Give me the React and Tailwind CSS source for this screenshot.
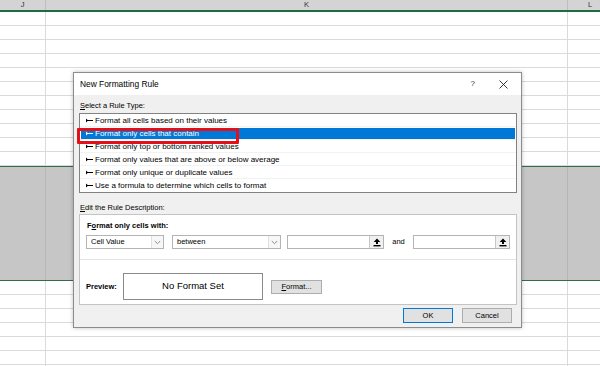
import React from "react";

const font = { fontFamily: '"Liberation Sans", Arial, sans-serif' };

function Row() {
  return (
    <div className="flex h-[14px] border-b border-[#dadada]">
      <div className="w-[46px] border-r border-[#dadada]" />
      <div className="flex-1 border-r border-[#dadada]" />
      <div className="w-[32px]" />
    </div>
  );
}

function Marker({ color }) {
  return (
    <svg width="7" height="5" viewBox="0 0 7 5" className="shrink-0">
      <path d="M0 0.5 L2.2 2.5 L0 4.5 Z" fill={color} />
      <rect x="0" y="2" width="7" height="1" fill={color} />
    </svg>
  );
}

function Chevron() {
  return (
    <svg width="7" height="5" viewBox="0 0 7 5">
      <path d="M0.8 1 L3.5 3.7 L6.2 1" fill="none" stroke="#8a8a8a" strokeWidth="1" />
    </svg>
  );
}

function Collapse() {
  return (
    <svg width="8" height="9" viewBox="0 0 8 9">
      <path d="M4 0.5 L7.3 4 L5 4 L5 6 L3 6 L3 4 L0.7 4 Z" fill="#000" />
      <rect x="0.5" y="7" width="7" height="1.4" fill="#000" />
    </svg>
  );
}

function Dropdown({ label, w }) {
  return (
    <div className={`flex h-[14px] ${w} border border-[#b4b4b4] bg-white`}>
      <div className="flex-1 pl-[4px] text-[7.5px] leading-[12px]">{label}</div>
      <div className="w-[12px] flex items-center justify-center border-l border-[#e0e0e0] bg-[#f7f7f7]">
        <Chevron />
      </div>
    </div>
  );
}

function RefInput() {
  return (
    <div className="flex h-[14px] w-[97px] border border-[#b4b4b4] bg-white">
      <div className="flex-1" />
      <div className="w-[14px] flex items-center justify-center border-l border-[#c8c8c8] bg-[#f0f0f0]">
        <Collapse />
      </div>
    </div>
  );
}

const rules = [
  "Format all cells based on their values",
  "Format only cells that contain",
  "Format only top or bottom ranked values",
  "Format only values that are above or below average",
  "Format only unique or duplicate values",
  "Use a formula to determine which cells to format",
];

export default function App() {
  return (
    <div className="relative w-[600px] h-[366px] overflow-hidden bg-white" style={font}>
      {/* column headers */}
      <div className="flex h-[12px] bg-[#d4d4d4] border-b-2 border-[#1f6b43] text-[7.5px] text-[#333] leading-[10px]">
        <div className="w-[46px] border-r border-[#bdbdbd] text-center">J</div>
        <div className="flex-1 border-r border-[#bdbdbd] text-center">K</div>
        <div className="w-[32px] text-center pl-[12px]">L</div>
      </div>

      {Array.from({ length: 11 }).map((_, i) => (
        <Row key={"a" + i} />
      ))}

      {/* selected rows */}
      <div className="flex h-[115px] bg-[#c6c6c6] border-y border-[#2f6e4a]">
        <div className="w-[46px] border-r border-[#b6b6b6]" />
        <div className="flex-1 border-r border-[#b6b6b6]" />
        <div className="w-[32px]" />
      </div>

      {Array.from({ length: 7 }).map((_, i) => (
        <Row key={"b" + i} />
      ))}

      {/* dialog */}
      <div className="absolute left-[73px] top-[72px] w-[449px] h-[256px] border border-[#8c8c8c] bg-[#f0f0f0] shadow-[0_0_4px_rgba(0,0,0,0.25)]">
        <div className="flex items-center h-[22px] bg-white pl-[6px] text-[8.4px] text-black">
          <span className="flex-1">New Formatting Rule</span>
          <span className="text-[8px] text-[#333] mr-[24px]">?</span>
          <svg width="9" height="9" viewBox="0 0 9 9" className="mr-[13px]">
            <path d="M0.5 0.5 L8.5 8.5 M8.5 0.5 L0.5 8.5" stroke="#222" strokeWidth="0.9" />
          </svg>
        </div>

        <div className="px-[5px]">
          <div className="mt-[5px] h-[12px] text-[7.5px] leading-[12px] pl-[1px]">
            <u>S</u>elect a Rule Type:
          </div>
          <div className="mt-[1px] w-[438px] border border-[#828282] bg-white">
            {rules.map((r, i) => (
              <div key={r} className="h-[13px] border-b border-[#f2f2f2] last:border-b-0 px-[1px] pt-[1px]">
                <div
                  className={`flex items-center gap-[2px] h-[11px] pl-[5px] text-[8px] ${
                    i === 1 ? "bg-[#0078d7] text-white" : "text-black"
                  }`}
                >
                  <Marker color={i === 1 ? "#fff" : "#000"} />
                  <span>{r}</span>
                </div>
              </div>
            ))}
          </div>

          <div className="mt-[9px] h-[12px] text-[7.5px] leading-[12px] pl-[1px]">
            <u>E</u>dit the Rule Description:
          </div>
          <div className="w-[438px] h-[91px] border border-[#c4c4c4] bg-white">
            <div className="px-[6px] pt-[6px] pb-[10px] border-b border-[#e3e3e3]">
              <div className="text-[7.5px] font-bold leading-[10px] pl-[1px]">
                F<u>o</u>rmat only cells with:
              </div>
              <div className="flex items-center mt-[4px]">
                <Dropdown label="Cell Value" w="w-[78px]" />
                <div className="w-[8px]" />
                <Dropdown label="between" w="w-[109px]" />
                <div className="w-[6px]" />
                <RefInput />
                <span className="w-[29px] text-center text-[7.5px]">and</span>
                <RefInput />
              </div>
            </div>
            <div className="flex items-center px-[6px] pt-[13px]">
              <span className="w-[37px] text-[7.5px] font-bold">Preview:</span>
              <div className="w-[140px] h-[27px] border border-[#8a8a8a] flex items-center justify-center text-[9.5px]">
                No Format Set
              </div>
              <div className="ml-[8px] w-[51px] h-[14px] border border-[#adadad] bg-[#e1e1e1] flex items-center justify-center text-[7.5px]">
                <span>
                  <u>F</u>ormat...
                </span>
              </div>
            </div>
          </div>

          <div className="flex justify-end gap-[9px] mt-[3px] pr-[4px]">
            <div className="w-[50px] h-[15px] border-[1.5px] border-[#0078d7] bg-[#e1e1e1] flex items-center justify-center text-[7.5px]">
              OK
            </div>
            <div className="w-[50px] h-[15px] border border-[#adadad] bg-[#e1e1e1] flex items-center justify-center text-[7.5px]">
              Cancel
            </div>
          </div>
        </div>

        {/* red highlight */}
        <div className="absolute left-[3px] top-[55px] w-[162px] h-[16px] border-[3px] border-[#e3101a] rounded-[1px]" />
      </div>
    </div>
  );
}
